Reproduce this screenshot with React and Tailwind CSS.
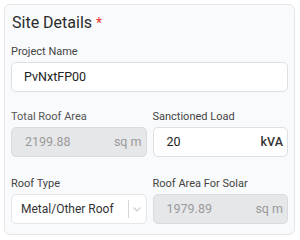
export default function App() {
  const font = { fontFamily: 'Roboto, "Noto Sans", sans-serif' };
  return (
    <div className="w-[300px] h-[240px] bg-white p-[4px] pr-[5px]" style={font}>
      <div className="h-[231px] rounded-[6px] border border-[#e3e5e8] bg-[#f9fafb] px-[6px] pt-[8px]">
        <div className="h-[20px] leading-[20px] text-[16px] text-[#2b2b2b] pl-[1px]">
          Site Details <span className="text-[#e53935] text-[14px]">*</span>
        </div>
        <div className="mt-[12px] h-[14px] leading-[14px] text-[11px] text-[#444]">Project Name</div>
        <div className="mt-[3px] h-[30px] rounded-[5px] border border-[#dcdfe3] bg-white flex items-center pl-[12px] text-[12.5px] text-[#222]">
          PvNxtFP00
        </div>
        <div className="mt-[18px] grid grid-cols-2 gap-x-[6px]">
          <div>
            <div className="h-[14px] leading-[14px] text-[11px] text-[#555]">Total Roof Area</div>
            <div className="mt-[3px] h-[30px] rounded-[5px] border border-[#d9dbde] bg-[#e6e7e9] flex items-center justify-between pl-[13px] pr-[4px] text-[12.5px] text-[#9a9a9a]">
              <span>2199.88</span>
              <span>sq m</span>
            </div>
          </div>
          <div>
            <div className="h-[14px] leading-[14px] text-[11px] text-[#444]">Sanctioned Load</div>
            <div className="mt-[3px] h-[30px] rounded-[5px] border border-[#dcdfe3] bg-white flex items-center justify-between pl-[13px] pr-[4px] text-[12.5px] text-[#222]">
              <span>20</span>
              <span className="text-[#333] font-medium">kVA</span>
            </div>
          </div>
          <div className="mt-[20px]">
            <div className="h-[14px] leading-[14px] text-[11px] text-[#444]">Roof Type</div>
            <div className="mt-[3px] h-[30px] rounded-[5px] border border-[#e3e5e8] bg-white flex items-center pl-[9px] text-[12px] text-[#333]">
              <span className="flex-1">Metal/Other Roof</span>
              <span className="h-[18px] w-px bg-[#d6d6d6]"></span>
              <svg width="16" height="16" viewBox="0 0 16 16" className="mr-[1px]" fill="none" stroke="#cfcfcf" strokeWidth="1.2">
                <path d="M4.5 6.5l3.5 3.5 3.5-3.5" />
              </svg>
            </div>
          </div>
          <div className="mt-[20px]">
            <div className="h-[14px] leading-[14px] text-[11px] text-[#444]">Roof Area For Solar</div>
            <div className="mt-[3px] h-[30px] rounded-[5px] border border-[#d9dbde] bg-[#e6e7e9] flex items-center justify-between pl-[13px] pr-[4px] text-[12.5px] text-[#9a9a9a]">
              <span>1979.89</span>
              <span>sq m</span>
            </div>
          </div>
        </div>
      </div>
    </div>
  );
}
